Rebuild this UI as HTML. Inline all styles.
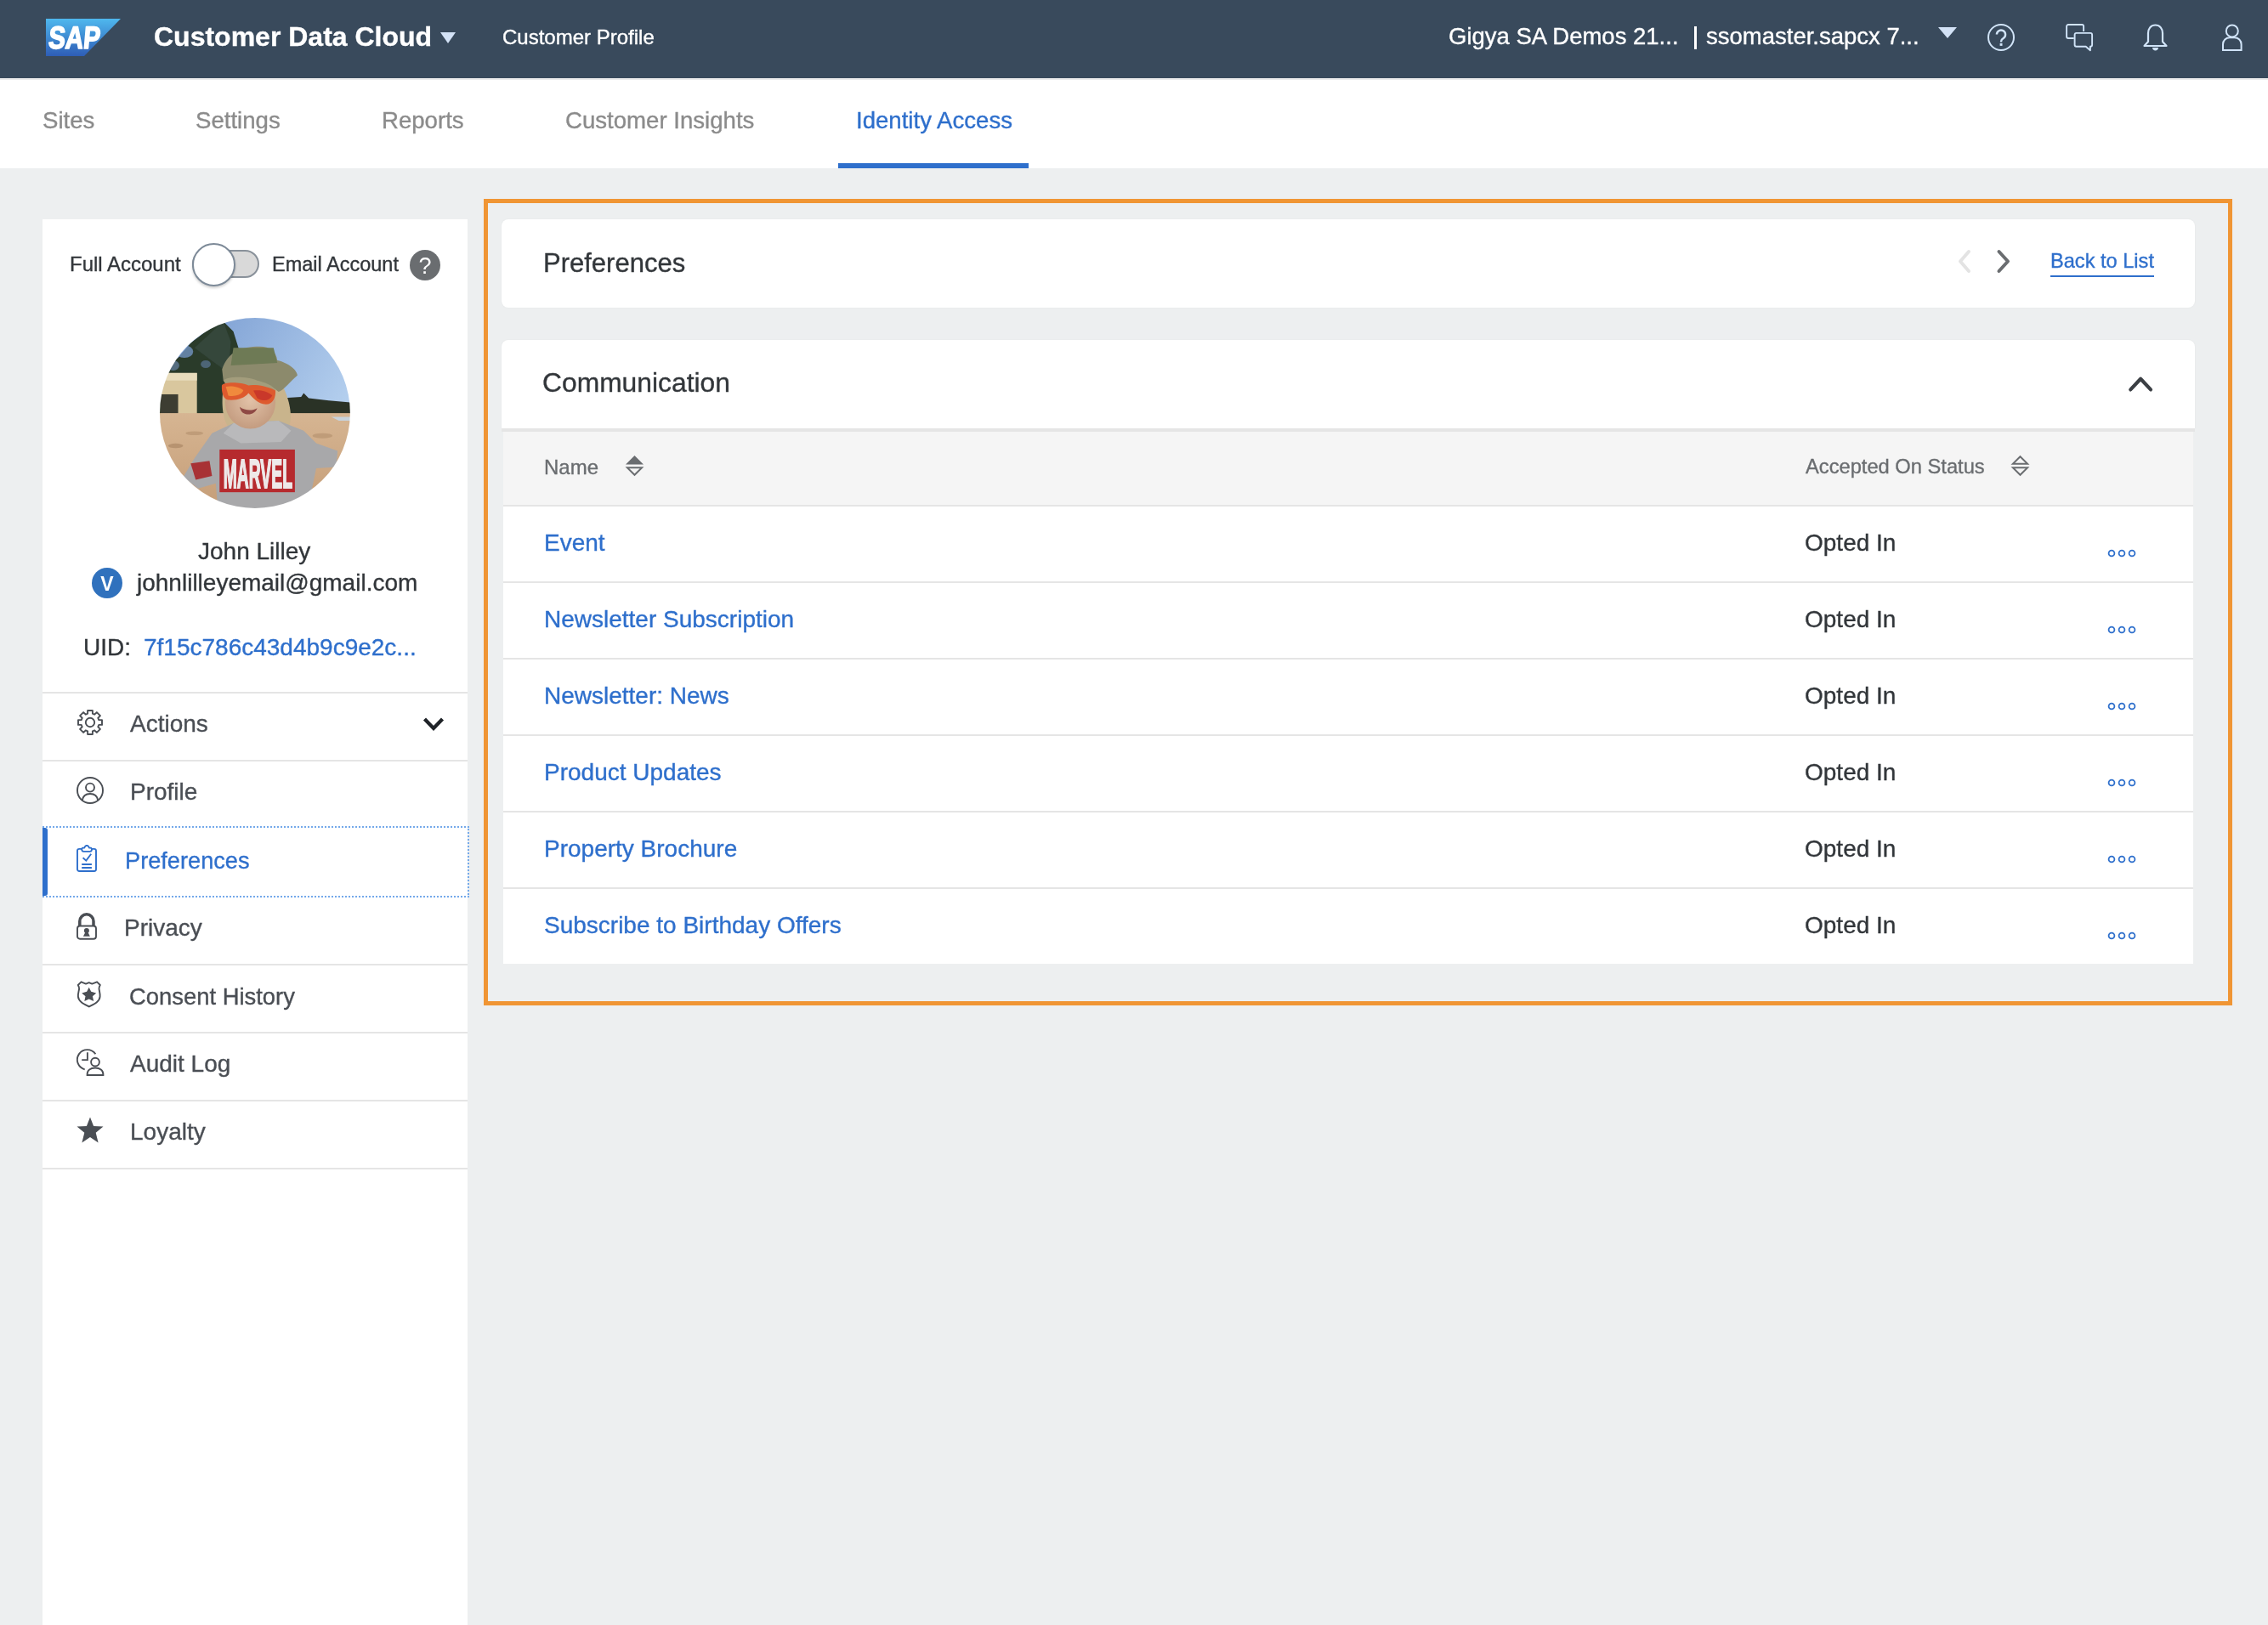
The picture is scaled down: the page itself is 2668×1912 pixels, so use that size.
<!DOCTYPE html><html><head><meta charset="utf-8"><style>
html,body{margin:0;padding:0;}
body{width:2668px;height:1912px;position:relative;overflow:hidden;background:#edeff0;font-family:"Liberation Sans",sans-serif;}
.t{position:absolute;white-space:nowrap;will-change:transform;-webkit-text-stroke:0.35px currentColor;}
.r{position:absolute;display:block;will-change:transform;}
</style></head><body>
<div class="r" style="left:0px;top:0px;width:2668px;height:92px;background:#394a5c;"></div>
<div class="r" style="left:0px;top:92px;width:2668px;height:2px;background:#ececec;"></div>
<svg class="r" style="left:54px;top:22px" width="88" height="44" viewBox="0 0 88 44"><defs><linearGradient id="lg" x1="0" y1="0" x2="0" y2="1"><stop offset="0" stop-color="#4fb8ee"/><stop offset="1" stop-color="#2e5db6"/></linearGradient></defs>
<polygon points="0,0 88,0 45,44 0,44" fill="url(#lg)"/>
<text x="2.2" y="35" font-family="Liberation Sans" font-weight="700" font-size="37" fill="#fff" stroke="#fff" stroke-width="1.7" stroke-linejoin="round" textLength="61" lengthAdjust="spacingAndGlyphs" transform="skewX(-5) translate(3,0)">SAP</text></svg>
<div class="t" style="left:181.0px;top:26.5px;font-size:32px;line-height:32px;color:#fff;font-weight:700;">Customer Data Cloud</div>
<svg class="r" style="left:518px;top:38px" width="18" height="13" viewBox="0 0 18 13"><polygon points="0,0 18,0 9,13" fill="#d3e2f6"/></svg>
<div class="t" style="left:591.0px;top:31.7px;font-size:24px;line-height:24px;color:#fff;font-weight:400;">Customer Profile</div>
<div class="t" style="left:1704.0px;top:28.7px;font-size:27.5px;line-height:27.5px;color:#fff;font-weight:400;">Gigya SA Demos 21...</div>
<div class="r" style="left:1993px;top:31px;width:3px;height:27px;background:#fff;"></div>
<div class="t" style="left:2007.0px;top:28.7px;font-size:27.5px;line-height:27.5px;color:#fff;font-weight:400;">ssomaster.sapcx 7...</div>
<svg class="r" style="left:2280px;top:32px" width="22" height="13" viewBox="0 0 22 13"><polygon points="0,0 22,0 11,13" fill="#d3e2f6"/></svg>
<svg class="r" style="left:2336px;top:26px" width="36" height="36" viewBox="0 0 36 36"><circle cx="18" cy="18" r="15" fill="none" stroke="#d1e4f8" stroke-width="2"/><path d="M12.9 14.6a5.1 5.1 0 1 1 7.8 4.3c-1.5 0.9-2.6 1.8-2.6 3.6v0.9" fill="none" stroke="#d1e4f8" stroke-width="2.4"/><rect x="16.6" y="25" width="2.9" height="2.9" fill="#d1e4f8"/></svg>
<svg class="r" style="left:2428px;top:26px" width="36" height="36" viewBox="0 0 36 36"><path d="M11.7 19H5.1a2 2 0 0 1-2-2V5a2 2 0 0 1 2-2h16a2 2 0 0 1 2 2v6" fill="none" stroke="#d1e4f8" stroke-width="1.9"/><path d="M14.6 12.9h16.5a2 2 0 0 1 2 2v11.9a2 2 0 0 1-2 2h-0.2v4.4l-5.2-4.4H14.6a2 2 0 0 1-2-2V14.9a2 2 0 0 1 2-2z" fill="none" stroke="#d1e4f8" stroke-width="1.9" stroke-linejoin="round"/></svg>
<svg class="r" style="left:2520px;top:26px" width="32" height="36" viewBox="0 0 32 36"><path d="M15.5 3.5c-5.5 0-8.5 4.5-8.5 9.5v10L2.5 28h26L24 23V13c0-5-3-9.5-8.5-9.5z" fill="none" stroke="#d1e4f8" stroke-width="2.2" stroke-linejoin="round"/><path d="M12 30h7c0 2-1.5 3.5-3.5 3.5S12 32 12 30z" fill="#d1e4f8"/></svg>
<svg class="r" style="left:2612px;top:26px" width="28" height="36" viewBox="0 0 28 36"><circle cx="13.8" cy="10.4" r="7" fill="none" stroke="#d1e4f8" stroke-width="2"/><path d="M3 33V26c0-4.5 3.5-7.8 8-7.8h5.6c4.5 0 8 3.3 8 7.8v7z" fill="none" stroke="#d1e4f8" stroke-width="2"/></svg>
<div class="r" style="left:0px;top:94px;width:2668px;height:104px;background:#fff;"></div>
<div class="t" style="left:49.5px;top:128.3px;font-size:27.6px;line-height:27.6px;color:#8b8b8b;font-weight:400;">Sites</div>
<div class="t" style="left:229.5px;top:128.3px;font-size:27.6px;line-height:27.6px;color:#8b8b8b;font-weight:400;">Settings</div>
<div class="t" style="left:448.5px;top:128.3px;font-size:27.6px;line-height:27.6px;color:#8b8b8b;font-weight:400;">Reports</div>
<div class="t" style="left:664.5px;top:128.3px;font-size:27.6px;line-height:27.6px;color:#8b8b8b;font-weight:400;">Customer Insights</div>
<div class="t" style="left:1006.5px;top:128.3px;font-size:27.6px;line-height:27.6px;color:#2e6fcc;font-weight:400;">Identity Access</div>
<div class="r" style="left:986px;top:192px;width:224px;height:6px;background:#2e6fcc;"></div>
<div class="r" style="left:50px;top:258px;width:500px;height:1654px;background:#fff;"></div>
<div class="t" style="left:82.0px;top:299.4px;font-size:24px;line-height:24px;color:#32363a;font-weight:400;">Full Account</div>
<div class="r" style="left:226px;top:294px;width:79px;height:33px;background:#d9d9d9;border:2px solid #89919a;box-sizing:border-box;border-radius:17px"></div>
<div class="r" style="left:226px;top:286px;width:51px;height:51px;background:#fff;border:2px solid #7d8a98;box-sizing:border-box;border-radius:50%;box-shadow:0 2px 3px rgba(0,0,0,0.18)"></div>
<div class="t" style="left:319.5px;top:299.8px;font-size:23.5px;line-height:23.5px;color:#32363a;font-weight:400;">Email Account</div>
<svg class="r" style="left:482px;top:294px" width="36" height="36" viewBox="0 0 36 36"><circle cx="18" cy="18" r="18" fill="#6a6d70"/><text x="18" y="27.5" text-anchor="middle" font-family="Liberation Sans" font-size="27" fill="#fff">?</text></svg>
<svg class="r" style="left:180px;top:365px" width="240" height="240" viewBox="0 0 1625 1625"><defs><clipPath id="av"><circle cx="812" cy="819" r="758"/></clipPath><linearGradient id="sky" x1="0" y1="0" x2="1" y2="0.6"><stop offset="0" stop-color="#6f93cc"/><stop offset="1" stop-color="#bcd6f2"/></linearGradient><linearGradient id="sand" x1="0" y1="0" x2="0" y2="1"><stop offset="0" stop-color="#d6b592"/><stop offset="1" stop-color="#c49c76"/></linearGradient><radialGradient id="face" cx="0.5" cy="0.45" r="0.55"><stop offset="0" stop-color="#e2c2a8"/><stop offset="1" stop-color="#c49c80"/></radialGradient></defs>
<filter id="bl"><feGaussianBlur stdDeviation="5"/></filter><g clip-path="url(#av)"><g filter="url(#bl)">
<rect x="0" y="0" width="1625" height="1625" fill="url(#sky)"/>
<path d="M0 840 L0 470 L120 420 L200 380 L300 260 L420 170 L560 90 L640 170 L690 330 L700 500 L690 830 Z" fill="#2a3a2c"/>
<path d="M330 300 L560 90 L620 250 L600 500 Z" fill="#34463a"/>
<ellipse cx="250" cy="330" rx="70" ry="50" fill="#7d9fd4" opacity="0.7"/><ellipse cx="160" cy="440" rx="50" ry="40" fill="#7d9fd4" opacity="0.5"/><ellipse cx="420" cy="430" rx="40" ry="30" fill="#6f8fc0" opacity="0.5"/>
<rect x="60" y="500" width="290" height="330" fill="#d9c79e"/>
<rect x="60" y="500" width="290" height="60" fill="#e8dcbc"/>
<rect x="60" y="670" width="140" height="155" fill="#3e3c32"/>
<path d="M1000 860 L1020 700 L1180 690 L1200 660 L1240 700 L1400 720 L1625 740 L1625 880 Z" fill="#2b3028"/>
<rect x="0" y="820" width="1625" height="805" fill="url(#sand)"/>
<path d="M1420 850 L1625 850 L1625 880 L1480 880 Z" fill="#c8d3dc"/>
<ellipse cx="180" cy="1080" rx="60" ry="18" fill="#9e7a58" opacity="0.5"/>
<ellipse cx="330" cy="980" rx="70" ry="16" fill="#a98461" opacity="0.45"/>
<ellipse cx="1350" cy="1000" rx="80" ry="20" fill="#a98461" opacity="0.45"/>
<ellipse cx="1400" cy="1200" rx="70" ry="20" fill="#a4805e" opacity="0.4"/>
<path d="M560 620 C540 760 560 880 600 930 L1080 930 C1120 850 1080 700 1040 620 Z" fill="#c9b48c"/>
<path d="M240 1330 L330 1180 L470 980 L640 900 L1000 880 L1200 960 L1300 1060 L1470 1120 L1460 1250 L1300 1260 L1250 1500 L1200 1625 L520 1625 L500 1380 L360 1420 Z" fill="#a8a8aa"/>
<path d="M640 900 L1000 880 L1100 960 L1020 1050 L700 1060 L560 980 Z" fill="#b9b9bb"/>
<path d="M300 1220 L450 1200 L470 1320 L340 1350 Z" fill="#a83236"/>
<ellipse cx="775" cy="735" rx="200" ry="210" fill="url(#face)"/>
<path d="M550 470 C600 330 700 290 850 290 C930 290 980 330 990 400 C1080 420 1150 480 1150 520 C1100 560 1040 640 1000 650 C900 560 700 520 560 560 Z" fill="#8c8a6c"/>
<path d="M640 300 L960 300 L990 420 L620 440 Z" fill="#6e7a54"/>
<path d="M560 560 C600 520 760 530 830 560 C880 570 960 600 980 640 C920 620 700 600 600 620 Z" fill="#a39d7c"/>
<path d="M548 600 C560 570 700 570 760 600 C800 590 900 600 975 640 C980 700 950 750 900 750 C830 745 800 700 760 660 C730 700 670 720 600 715 C560 710 545 660 548 600 Z" fill="#de5a2e"/>
<path d="M580 610 C620 600 690 610 720 640 C700 680 640 690 600 680 Z" fill="#f08a3c"/>
<path d="M800 640 C860 630 920 650 950 680 C930 720 880 730 830 700 Z" fill="#c9372a"/>
<path d="M690 770 C730 800 790 805 830 780 C820 810 790 830 760 830 C720 830 700 810 690 770 Z" fill="#8f4a44"/>
<rect x="530" y="1110" width="600" height="340" fill="#b6292d"/>
<text x="560" y="1415" font-family="Liberation Sans" font-weight="700" font-size="330" fill="#eee9e9" stroke="#eee9e9" stroke-width="14" textLength="550" lengthAdjust="spacingAndGlyphs">MARVEL</text>
</g></g></svg>
<div class="t" style="left:233.0px;top:634.6px;font-size:28px;line-height:28px;color:#32363a;font-weight:400;">John Lilley</div>
<svg class="r" style="left:108px;top:668px" width="36" height="36" viewBox="0 0 36 36"><circle cx="18" cy="18" r="18" fill="#3071bd"/><text x="18" y="26.5" text-anchor="middle" font-family="Liberation Sans" font-weight="700" font-size="23" fill="#fff">V</text></svg>
<div class="t" style="left:161.0px;top:672.2px;font-size:28px;line-height:28px;color:#32363a;font-weight:400;">johnlilleyemail@gmail.com</div>
<div class="t" style="left:97.5px;top:748.2px;font-size:28px;line-height:28px;color:#32363a;font-weight:400;">UID:</div>
<div class="t" style="left:168.5px;top:748.2px;font-size:28px;line-height:28px;color:#2e6fcc;font-weight:400;">7f15c786c43d4b9c9e2c...</div>
<div class="r" style="left:50px;top:814px;width:500px;height:2px;background:#e5e5e5;"></div>
<div class="r" style="left:50px;top:894px;width:500px;height:2px;background:#e5e5e5;"></div>
<div class="r" style="left:50px;top:1134px;width:500px;height:2px;background:#e5e5e5;"></div>
<div class="r" style="left:50px;top:1214px;width:500px;height:2px;background:#e5e5e5;"></div>
<div class="r" style="left:50px;top:1294px;width:500px;height:2px;background:#e5e5e5;"></div>
<div class="r" style="left:50px;top:1374px;width:500px;height:2px;background:#e5e5e5;"></div>
<div class="r" style="left:50px;top:972px;width:502px;height:84px;background:transparent;border:2px dotted #74a9ea;box-sizing:border-box"></div>
<div class="r" style="left:50px;top:974px;width:6px;height:80px;background:#2e6fcc;border-radius:0 3px 3px 0"></div>
<svg class="r" style="left:90px;top:834px" width="32" height="32" viewBox="0 0 32 32"><path d="M13.10 5.70 L13.10 2.00 L18.90 2.00 L18.90 5.70 L21.23 6.67 L23.85 4.05 L27.95 8.15 L25.33 10.77 L26.30 13.10 L30.00 13.10 L30.00 18.90 L26.30 18.90 L25.33 21.23 L27.95 23.85 L23.85 27.95 L21.23 25.33 L18.90 26.30 L18.90 30.00 L13.10 30.00 L13.10 26.30 L10.77 25.33 L8.15 27.95 L4.05 23.85 L6.67 21.23 L5.70 18.90 L2.00 18.90 L2.00 13.10 L5.70 13.10 L6.67 10.77 L4.05 8.15 L8.15 4.05 L10.77 6.67Z" fill="none" stroke="#4a4e54" stroke-width="1.9" stroke-linejoin="round"/><circle cx="16" cy="16" r="5.2" fill="none" stroke="#4a4e54" stroke-width="1.9"/></svg>
<div class="t" style="left:153.0px;top:838.3px;font-size:28px;line-height:28px;color:#4a4e54;font-weight:400;">Actions</div>
<svg class="r" style="left:497px;top:843px" width="26" height="18" viewBox="0 0 26 18"><path d="M2.5 3l10.5 11 10.5-11" fill="none" stroke="#1f2328" stroke-width="4.2"/></svg>
<svg class="r" style="left:90px;top:914px" width="32" height="32" viewBox="0 0 32 32"><circle cx="16" cy="16" r="15" fill="none" stroke="#4a4e54" stroke-width="1.9"/><circle cx="16" cy="12.6" r="5" fill="none" stroke="#4a4e54" stroke-width="1.9"/><path d="M6.8 28c0.6-5.2 4.3-8 9.2-8s8.6 2.8 9.2 8" fill="none" stroke="#4a4e54" stroke-width="1.9"/></svg>
<div class="t" style="left:153.0px;top:918.3px;font-size:28px;line-height:28px;color:#4a4e54;font-weight:400;">Profile</div>
<svg class="r" style="left:90px;top:994px" width="32" height="32" viewBox="0 0 32 32"><rect x="1" y="4.9" width="22" height="26.1" rx="2.2" fill="none" stroke="#2e6fcc" stroke-width="1.9"/><path d="M6.9 3.6h2.2c0.8-1.6 1.7-2.8 3-2.8s2.2 1.2 3 2.8h2.1l0.8 1.6c-0.1 1.4-0.8 2.7-2 2.7h-7.8c-1.2 0-1.9-1.3-2-2.7z" fill="#fff" stroke="#2e6fcc" stroke-width="1.9" stroke-linejoin="round"/><path d="M7.6 15.2l3.7 3.4 5.9-7.9" fill="none" stroke="#2e6fcc" stroke-width="1.9"/><path d="M6.2 23h11.7M6.2 27h11.7" stroke="#2e6fcc" stroke-width="1.9"/></svg>
<div class="t" style="left:146.5px;top:999.0px;font-size:27.2px;line-height:27.2px;color:#2e6fcc;font-weight:400;">Preferences</div>
<svg class="r" style="left:90px;top:1074px" width="32" height="32" viewBox="0 0 32 32"><path d="M3.8 15V9.9a8.1 8.1 0 0 1 16.2 0V15" fill="none" stroke="#4a4e54" stroke-width="3.5"/><rect x="1" y="15.5" width="22" height="15.2" rx="3" fill="#fff" stroke="#4a4e54" stroke-width="1.9"/><circle cx="11.9" cy="20.9" r="3" fill="#4a4e54"/><path d="M10.6 22.5h2.6l2.7 5.3h-8z" fill="#4a4e54"/></svg>
<div class="t" style="left:146.0px;top:1078.3px;font-size:28px;line-height:28px;color:#4a4e54;font-weight:400;">Privacy</div>
<svg class="r" style="left:90px;top:1154px" width="32" height="32" viewBox="0 0 32 32"><path d="M5.5 1.3L11 3.6 14.7 2.1 18.3 3.6 24.1 1.3 27.8 5C27 6.5 26.3 7.8 26.5 9.5 26.9 12.5 27.9 15 27.6 18.6 27.2 24.6 20.5 27.5 14.8 30.5 9.1 27.5 2.4 24.6 1.9 18.6 1.6 15 2.7 12.5 3.1 9.5 3.3 7.8 2.6 6.5 1.8 5Z" fill="none" stroke="#4a4e54" stroke-width="1.9" stroke-linejoin="round"/><path d="M14.7 7.85L17.2 12.8 23.2 14.4 18.9 18.2 20.2 24 14.7 21.4 9.3 24 10.5 18.2 6.2 14.4 12.1 12.8Z" fill="#4a4e54"/></svg>
<div class="t" style="left:151.5px;top:1158.8px;font-size:27.4px;line-height:27.4px;color:#4a4e54;font-weight:400;">Consent History</div>
<svg class="r" style="left:90px;top:1234px" width="34" height="32" viewBox="0 0 34 32"><path d="M22.4 6.2A11.8 11.8 0 1 0 9.7 24.3" fill="none" stroke="#4a4e54" stroke-width="1.9"/><path d="M12.9 4.2v8.9H6.2" fill="none" stroke="#4a4e54" stroke-width="1.9"/><circle cx="22" cy="15.6" r="4.9" fill="none" stroke="#4a4e54" stroke-width="1.9"/><path d="M12.6 31v-1c0-4.8 3.8-7.5 9.4-7.5s9.4 2.7 9.4 7.5v1z" fill="none" stroke="#4a4e54" stroke-width="1.9"/></svg>
<div class="t" style="left:153.0px;top:1238.3px;font-size:28px;line-height:28px;color:#4a4e54;font-weight:400;">Audit Log</div>
<svg class="r" style="left:90px;top:1314px" width="32" height="32" viewBox="0 0 32 32"><path d="M16 0.5l4.1 10.4 11.4 0.7-8.8 7.2 2.9 11.7-9.6-6.5-9.6 6.5 2.9-11.7-8.8-7.2 11.4-0.7z" fill="#4a4e54"/></svg>
<div class="t" style="left:153.0px;top:1318.3px;font-size:28px;line-height:28px;color:#4a4e54;font-weight:400;">Loyalty</div>
<div class="r" style="left:569px;top:234px;width:2057px;height:949px;background:transparent;border:5px solid #f09534;box-sizing:border-box"></div>
<div class="r" style="left:590px;top:258px;width:1992px;height:104px;background:#fff;border-radius:8px;box-shadow:0 0 2px rgba(0,0,0,0.06)"></div>
<div class="t" style="left:638.5px;top:293.8px;font-size:31px;line-height:31px;color:#32363a;font-weight:400;">Preferences</div>
<svg class="r" style="left:2300px;top:292px" width="22" height="32" viewBox="0 0 22 32"><path d="M16 4L6 15.5 16 27" fill="none" stroke="#e3e3e3" stroke-width="4" stroke-linecap="round" stroke-linejoin="round"/></svg>
<svg class="r" style="left:2345px;top:292px" width="22" height="32" viewBox="0 0 22 32"><path d="M6.5 4L17 15.5 6.5 27" fill="none" stroke="#6a6d70" stroke-width="4" stroke-linecap="round" stroke-linejoin="round"/></svg>
<div class="t" style="left:2411.8px;top:296.0px;font-size:23.6px;line-height:23.6px;color:#2e6fcc;font-weight:400;">Back to List</div>
<div class="r" style="left:2412px;top:324px;width:122px;height:2px;background:#2e6fcc;"></div>
<div class="r" style="left:590px;top:400px;width:1992px;height:104px;background:#fff;border-radius:8px 8px 0 0;box-shadow:0 0 2px rgba(0,0,0,0.06)"></div>
<div class="t" style="left:637.5px;top:435.1px;font-size:31.8px;line-height:31.8px;color:#32363a;font-weight:400;">Communication</div>
<svg class="r" style="left:2500px;top:438px" width="36" height="28" viewBox="0 0 36 28"><path d="M6.3 20.4L18.15 7.8 30 20.4" fill="none" stroke="#3b3f44" stroke-width="4.2" stroke-linecap="round" stroke-linejoin="round"/></svg>
<div class="r" style="left:590px;top:504px;width:1992px;height:4px;background:#e5e5e5;"></div>
<div class="r" style="left:592px;top:594px;width:1988px;height:2px;background:#e5e5e5;"></div>
<div class="r" style="left:592px;top:508px;width:1988px;height:86px;background:#f5f5f5;"></div>
<div class="t" style="left:640.0px;top:537.5px;font-size:24px;line-height:24px;color:#6a6d70;font-weight:400;">Name</div>
<svg class="r" style="left:734px;top:534px" width="26" height="28" viewBox="0 0 26 28"><polygon points="2,12.5 12.5,2 23,12.5" fill="#6a6d70"/><polygon points="3.8,16.2 21.2,16.2 12.5,24.8" fill="none" stroke="#6a6d70" stroke-width="1.9"/></svg>
<div class="t" style="left:2124.0px;top:537.9px;font-size:23.7px;line-height:23.7px;color:#6a6d70;font-weight:400;">Accepted On Status</div>
<svg class="r" style="left:2364px;top:534px" width="26" height="28" viewBox="0 0 26 28"><polygon points="3.8,11.8 21.2,11.8 12.5,3.2" fill="none" stroke="#6a6d70" stroke-width="1.9"/><polygon points="3.8,16.2 21.2,16.2 12.5,24.8" fill="none" stroke="#6a6d70" stroke-width="1.9"/></svg>
<div class="r" style="left:592px;top:596px;width:1988px;height:88px;background:#fff;"></div>
<div class="r" style="left:592px;top:684px;width:1988px;height:2px;background:#e5e5e5;"></div>
<div class="t" style="left:640.0px;top:625.1px;font-size:28px;line-height:28px;color:#2e6fcc;font-weight:400;">Event</div>
<div class="t" style="left:2123.0px;top:625.1px;font-size:28px;line-height:28px;color:#32363a;font-weight:400;">Opted In</div>
<svg class="r" style="left:2476px;top:642.8px" width="40" height="16" viewBox="0 0 40 16"><circle cx="8" cy="8" r="3.4" fill="none" stroke="#2e6fcc" stroke-width="1.8"/><circle cx="20" cy="8" r="3.4" fill="none" stroke="#2e6fcc" stroke-width="1.8"/><circle cx="32" cy="8" r="3.4" fill="none" stroke="#2e6fcc" stroke-width="1.8"/></svg>
<div class="r" style="left:592px;top:686px;width:1988px;height:88px;background:#fff;"></div>
<div class="r" style="left:592px;top:774px;width:1988px;height:2px;background:#e5e5e5;"></div>
<div class="t" style="left:640.0px;top:715.1px;font-size:28px;line-height:28px;color:#2e6fcc;font-weight:400;">Newsletter Subscription</div>
<div class="t" style="left:2123.0px;top:715.1px;font-size:28px;line-height:28px;color:#32363a;font-weight:400;">Opted In</div>
<svg class="r" style="left:2476px;top:732.8px" width="40" height="16" viewBox="0 0 40 16"><circle cx="8" cy="8" r="3.4" fill="none" stroke="#2e6fcc" stroke-width="1.8"/><circle cx="20" cy="8" r="3.4" fill="none" stroke="#2e6fcc" stroke-width="1.8"/><circle cx="32" cy="8" r="3.4" fill="none" stroke="#2e6fcc" stroke-width="1.8"/></svg>
<div class="r" style="left:592px;top:776px;width:1988px;height:88px;background:#fff;"></div>
<div class="r" style="left:592px;top:864px;width:1988px;height:2px;background:#e5e5e5;"></div>
<div class="t" style="left:640.0px;top:805.1px;font-size:28px;line-height:28px;color:#2e6fcc;font-weight:400;">Newsletter: News</div>
<div class="t" style="left:2123.0px;top:805.1px;font-size:28px;line-height:28px;color:#32363a;font-weight:400;">Opted In</div>
<svg class="r" style="left:2476px;top:822.8px" width="40" height="16" viewBox="0 0 40 16"><circle cx="8" cy="8" r="3.4" fill="none" stroke="#2e6fcc" stroke-width="1.8"/><circle cx="20" cy="8" r="3.4" fill="none" stroke="#2e6fcc" stroke-width="1.8"/><circle cx="32" cy="8" r="3.4" fill="none" stroke="#2e6fcc" stroke-width="1.8"/></svg>
<div class="r" style="left:592px;top:866px;width:1988px;height:88px;background:#fff;"></div>
<div class="r" style="left:592px;top:954px;width:1988px;height:2px;background:#e5e5e5;"></div>
<div class="t" style="left:640.0px;top:895.1px;font-size:28px;line-height:28px;color:#2e6fcc;font-weight:400;">Product Updates</div>
<div class="t" style="left:2123.0px;top:895.1px;font-size:28px;line-height:28px;color:#32363a;font-weight:400;">Opted In</div>
<svg class="r" style="left:2476px;top:912.8px" width="40" height="16" viewBox="0 0 40 16"><circle cx="8" cy="8" r="3.4" fill="none" stroke="#2e6fcc" stroke-width="1.8"/><circle cx="20" cy="8" r="3.4" fill="none" stroke="#2e6fcc" stroke-width="1.8"/><circle cx="32" cy="8" r="3.4" fill="none" stroke="#2e6fcc" stroke-width="1.8"/></svg>
<div class="r" style="left:592px;top:956px;width:1988px;height:88px;background:#fff;"></div>
<div class="r" style="left:592px;top:1044px;width:1988px;height:2px;background:#e5e5e5;"></div>
<div class="t" style="left:640.0px;top:985.1px;font-size:28px;line-height:28px;color:#2e6fcc;font-weight:400;">Property Brochure</div>
<div class="t" style="left:2123.0px;top:985.1px;font-size:28px;line-height:28px;color:#32363a;font-weight:400;">Opted In</div>
<svg class="r" style="left:2476px;top:1002.8px" width="40" height="16" viewBox="0 0 40 16"><circle cx="8" cy="8" r="3.4" fill="none" stroke="#2e6fcc" stroke-width="1.8"/><circle cx="20" cy="8" r="3.4" fill="none" stroke="#2e6fcc" stroke-width="1.8"/><circle cx="32" cy="8" r="3.4" fill="none" stroke="#2e6fcc" stroke-width="1.8"/></svg>
<div class="r" style="left:592px;top:1046px;width:1988px;height:88px;background:#fff;"></div>
<div class="t" style="left:640.0px;top:1075.1px;font-size:28px;line-height:28px;color:#2e6fcc;font-weight:400;">Subscribe to Birthday Offers</div>
<div class="t" style="left:2123.0px;top:1075.1px;font-size:28px;line-height:28px;color:#32363a;font-weight:400;">Opted In</div>
<svg class="r" style="left:2476px;top:1092.8px" width="40" height="16" viewBox="0 0 40 16"><circle cx="8" cy="8" r="3.4" fill="none" stroke="#2e6fcc" stroke-width="1.8"/><circle cx="20" cy="8" r="3.4" fill="none" stroke="#2e6fcc" stroke-width="1.8"/><circle cx="32" cy="8" r="3.4" fill="none" stroke="#2e6fcc" stroke-width="1.8"/></svg>
</body></html>
